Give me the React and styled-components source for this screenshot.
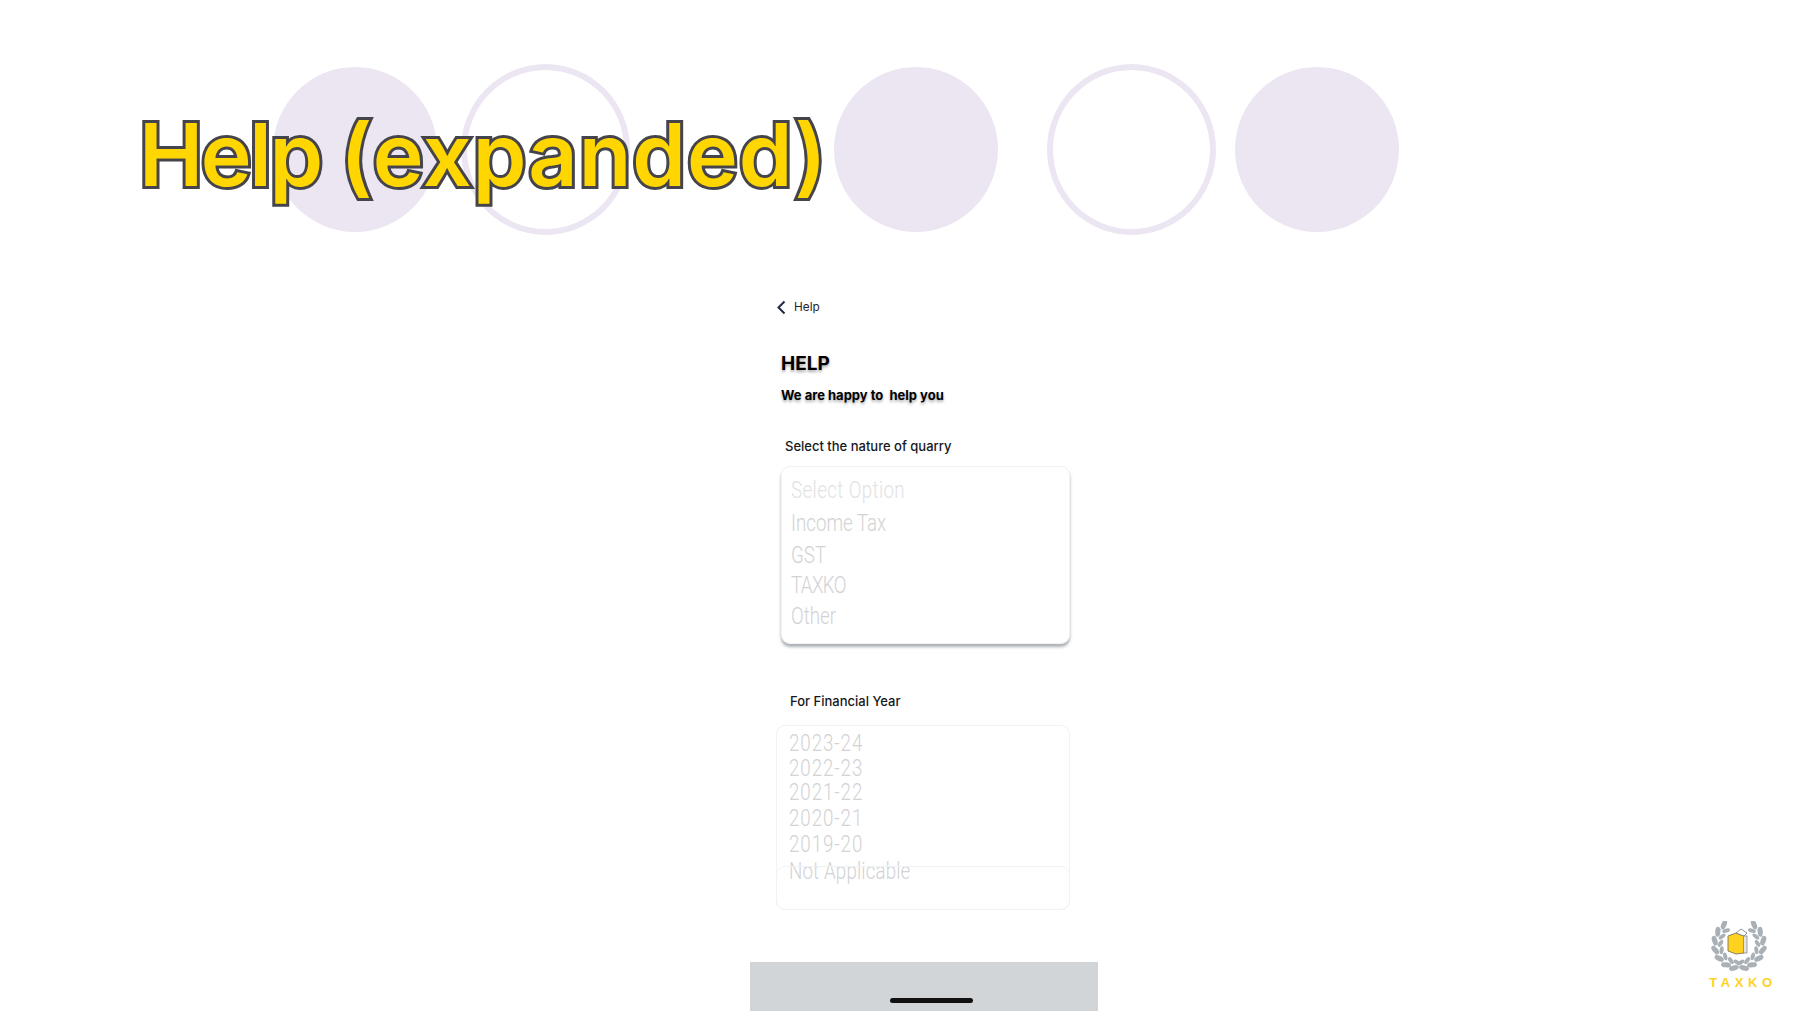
import React from "react";
import styled, { createGlobalStyle } from "styled-components";

const GlobalStyle = createGlobalStyle`
    html, body {
        margin: 0;
        padding: 0;
        background: #fff;
        font-family: "Inter", "Liberation Sans", sans-serif;
    }
`;

const Page = styled.div`
    position: relative;
    width: 1798px;
    height: 1011px;
    overflow: hidden;
    background: #fff;
    display: flex;
    flex-direction: column;
`;

const Hero = styled.div`
    display: flex;
    align-items: center;
    box-sizing: border-box;
    height: 250px;
    padding: 64px 0 15px 273px;
`;

const Disc = styled.div`
    flex: none;
    box-sizing: border-box;
    width: ${(p) => (p.$ring ? 169 : 164)}px;
    height: ${(p) => (p.$ring ? 171 : 165)}px;
    margin-left: ${(p) => p.$gap}px;
    border-radius: 50%;
    background: ${(p) => (p.$ring ? "transparent" : "#ece6f3")};
    border: ${(p) => (p.$ring ? "6px solid #ece6f3" : "none")};
`;

const Title = styled.h1`
    position: absolute;
    left: 139px;
    top: 103px;
    margin: 0;
    font-family: "Inter", sans-serif;
    font-size: 86px;
    line-height: 104px;
    font-weight: 600;
    white-space: nowrap;
    color: #ffd600;
    -webkit-text-stroke: 6px #45444a;
    paint-order: stroke fill;
`;

const TitleWord = styled.span`
    letter-spacing: ${(p) => p.$track}px;
`;

const Phone = styled.div`
    flex: 1;
    width: 348px;
    margin-left: 750px;
    display: flex;
    flex-direction: column;
`;

const BackRow = styled.div`
    display: flex;
    align-items: center;
    gap: 8px;
    height: 24px;
    margin: 45px 0 0 26px;
    font-size: 11.8px;
    color: #1f2330;
`;

const Heading = styled.div`
    margin: 34px 0 0 31px;
    font-size: 19px;
    line-height: 22px;
    font-weight: 700;
    color: #000;
    text-shadow: 0 2px 3px rgba(0, 0, 0, 0.35);
`;

const Sub = styled.div`
    margin: 11px 0 0 31px;
    font-size: 13px;
    line-height: 18px;
    font-weight: 700;
    white-space: pre;
    color: #000;
    text-shadow: 0 2px 3px rgba(0, 0, 0, 0.35);
`;

const Label = styled.div`
    margin: ${(p) => p.$top}px 0 0 ${(p) => p.$left}px;
    font-size: 13px;
    line-height: 18px;
    font-weight: 500;
    color: #16181c;
`;

const SelectBox = styled.div`
    position: relative;
    box-sizing: border-box;
    width: ${(p) => p.$width}px;
    height: ${(p) => p.$height}px;
    margin: ${(p) => p.$top}px 0 0 ${(p) => p.$left}px;
    padding: ${(p) => p.$pad}px 0 0 ${(p) => p.$inset}px;
    border-radius: 9px;
    background: #fff;
    border: 1px solid #f1f2f6;
    box-shadow: ${(p) =>
        p.$raised ? "0 3px 3px rgba(90, 100, 110, 0.5)" : "none"};
`;

const Option = styled.div`
    height: 26px;
    line-height: 26px;
    margin-top: ${(p) => p.$gap}px;
    font-family: "Roboto", sans-serif;
    font-weight: 300;
    font-size: 24px;
    letter-spacing: ${(p) => p.$track || 0}px;
    white-space: nowrap;
    color: ${(p) => (p.$dim ? "#e2e2e4" : "#d2d2d4")};
    transform: scaleX(0.78);
    transform-origin: left center;
`;

const GhostField = styled.div`
    position: absolute;
    left: -1px;
    right: -1px;
    bottom: -1px;
    height: 42px;
    border: 1px solid #f1f2f6;
    border-radius: 9px;
`;

const BottomBar = styled.div`
    margin-top: auto;
    box-sizing: border-box;
    height: 49px;
    padding: 36px 0 0 140px;
    background: #d1d5d8;
`;

const HomeIndicator = styled.div`
    width: 83px;
    height: 5px;
    border-radius: 3px;
    background: #111;
`;

const Logo = styled.div`
    position: absolute;
    right: 29px;
    bottom: 22px;
    display: flex;
    flex-direction: column;
    align-items: center;
    gap: 5px;
`;

const LogoText = styled.div`
    font-family: "Liberation Sans", sans-serif;
    font-size: 13px;
    line-height: 13px;
    font-weight: 700;
    letter-spacing: 4.6px;
    margin-right: -8px;
    color: #ffd21f;
`;

const queryOptions = [
    { text: "Select Option", gap: 0, dim: true, track: 0.5 },
    { text: "Income Tax", gap: 7 },
    { text: "GST", gap: 6 },
    { text: "TAXKO", gap: 4, track: -0.8 },
    { text: "Other", gap: 5 },
];

const yearOptions = [
    { text: "2023-24", gap: 0, track: 1.2 },
    { text: "2022-23", gap: -1, track: 1.2 },
    { text: "2021-22", gap: -2, track: 1.2 },
    { text: "2020-21", gap: 0, track: 1.2 },
    { text: "2019-20", gap: 0, track: 1.2 },
    { text: "Not Applicable", gap: 1, track: 0.2 },
];

// one side of the wreath: a leaf pair every 22 degrees along the stem
const wreathAngles = [38, 60, 82, 104, 126, 148, 168];

const leafAt = (t, radius, tilt) => {
    const rad = (t * Math.PI) / 180;
    const x = 30 - radius * Math.sin(rad);
    const y = 23 - radius * Math.cos(rad);
    return { x, y, r: 90 - t + tilt };
};

const Wreath = () => (
    <svg width="60" height="50" viewBox="0 0 60 50">
        {[0, 1].map((side) => (
            <g key={side} transform={side ? "translate(60 0) scale(-1 1)" : ""}>
                <path
                    d="M12 8 A22 22 0 0 0 29 46"
                    fill="none"
                    stroke="#a9b0b6"
                    strokeWidth="0.8"
                />
                {wreathAngles.map((t) => {
                    const outer = leafAt(t, 24.5, -28);
                    const inner = leafAt(t + 6, 18.5, 28);
                    return (
                        <g key={t} fill="#a9b0b6">
                            <ellipse
                                cx={outer.x}
                                cy={outer.y}
                                rx="2.6"
                                ry="5"
                                transform={`rotate(${outer.r} ${outer.x} ${outer.y})`}
                            />
                            <ellipse
                                cx={inner.x}
                                cy={inner.y}
                                rx="2"
                                ry="4"
                                transform={`rotate(${inner.r} ${inner.x} ${inner.y})`}
                            />
                        </g>
                    );
                })}
            </g>
        ))}
        <polygon points="19,15 27,12 35,15 35,32 27,33 19,30" fill="#ffd21f" stroke="#6b6a5a" strokeWidth="0.8" />
        <polygon points="27,12 32,8 38,12 35,15" fill="#fff" stroke="#77777a" strokeWidth="0.8" />
        <rect x="34.5" y="15" width="3.5" height="17" fill="#e4e4e4" stroke="#8a8a8a" strokeWidth="0.8" />
    </svg>
);

const App = () => {
    return (
        <Page>
            <GlobalStyle />
            <Hero>
                <Disc $gap={0} />
                <Disc $ring $gap={24} />
                <Disc $gap={204} />
                <Disc $ring $gap={49} />
                <Disc $gap={19} />
            </Hero>
            <Title>
                <TitleWord $track={-2.3}>Help </TitleWord>
                <TitleWord $track={1}>(expanded)</TitleWord>
            </Title>
            <Phone>
                <BackRow>
                    <svg width="10" height="15" viewBox="0 0 10 15">
                        <path d="M8.5 1.5 L2.5 7.5 L8.5 13.5" fill="none" stroke="#23284a" strokeWidth="2" />
                    </svg>
                    Help
                </BackRow>
                <Heading>HELP</Heading>
                <Sub>We are happy to  help you</Sub>
                <Label $top={33} $left={35}>Select the nature of quarry</Label>
                <SelectBox $raised $top={11} $left={31} $width={289} $height={178} $pad={10} $inset={9}>
                    {queryOptions.map((o) => (
                        <Option key={o.text} $gap={o.gap} $dim={o.dim} $track={o.track}>{o.text}</Option>
                    ))}
                </SelectBox>
                <Label $top={48} $left={40}>For Financial Year</Label>
                <SelectBox $top={15} $left={26} $width={294} $height={185} $pad={4} $inset={12}>
                    {yearOptions.map((o) => (
                        <Option key={o.text} $gap={o.gap} $track={o.track}>{o.text}</Option>
                    ))}
                    <GhostField />
                </SelectBox>
                <BottomBar>
                    <HomeIndicator />
                </BottomBar>
            </Phone>
            <Logo>
                <Wreath />
                <LogoText>TAXKO</LogoText>
            </Logo>
        </Page>
    );
};

export default App;
